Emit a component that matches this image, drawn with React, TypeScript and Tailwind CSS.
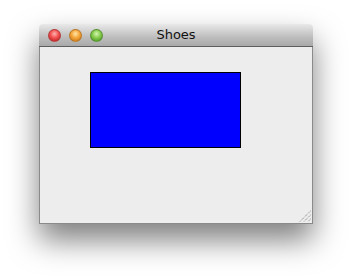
export default function App() {
  return (
    <div className="w-[353px] h-[279px] bg-white pl-[39px] pt-[24px]">
      <div className="w-[274px] h-[200px] flex flex-col rounded-t-[4px] shadow-[0_16px_30px_rgba(0,0,0,0.5)]">
        {/* Title bar */}
        <div className="relative h-[23px] flex items-center rounded-t-[4px] border-b border-[#5e5e5e] bg-[linear-gradient(to_bottom,#e9e9e9,#bdbdbd_60%,#a9a9a9)] pl-[9px] gap-[8px]">
          <span className="w-[13px] h-[13px] rounded-full border border-[#9a3a3a]/60 bg-[radial-gradient(circle_at_50%_35%,#ffb3b3_0%,#f25050_45%,#b01818_100%)]" />
          <span className="w-[13px] h-[13px] rounded-full border border-[#a0661f]/60 bg-[radial-gradient(circle_at_50%_35%,#ffe6a8_0%,#f5a63a_45%,#b86a10_100%)]" />
          <span className="w-[13px] h-[13px] rounded-full border border-[#4a7a2a]/60 bg-[radial-gradient(circle_at_50%_35%,#d6f5b0_0%,#86cc4e_45%,#3f8a1c_100%)]" />
          <div
            className="absolute inset-0 flex items-center justify-center text-[13px] text-[#111]"
            style={{ fontFamily: '"DejaVu Sans", sans-serif' }}
          >
            Shoes
          </div>
        </div>
        {/* Content */}
        <div className="relative flex-1 bg-[#ededed] border-x border-b border-[#8a8a8a]">
          <div className="ml-[50px] mt-[25px] w-[151px] h-[76px] border border-black bg-[#0000ff]" />
          <svg className="absolute right-[1px] bottom-[1px]" width="12" height="12" viewBox="0 0 12 12">
            <g stroke="#777" strokeWidth="1" strokeDasharray="1 1">
              <line x1="11.5" y1="1" x2="1" y2="11.5" />
              <line x1="11.5" y1="5" x2="5" y2="11.5" />
              <line x1="11.5" y1="9" x2="9" y2="11.5" />
            </g>
          </svg>
        </div>
      </div>
    </div>
  );
}
